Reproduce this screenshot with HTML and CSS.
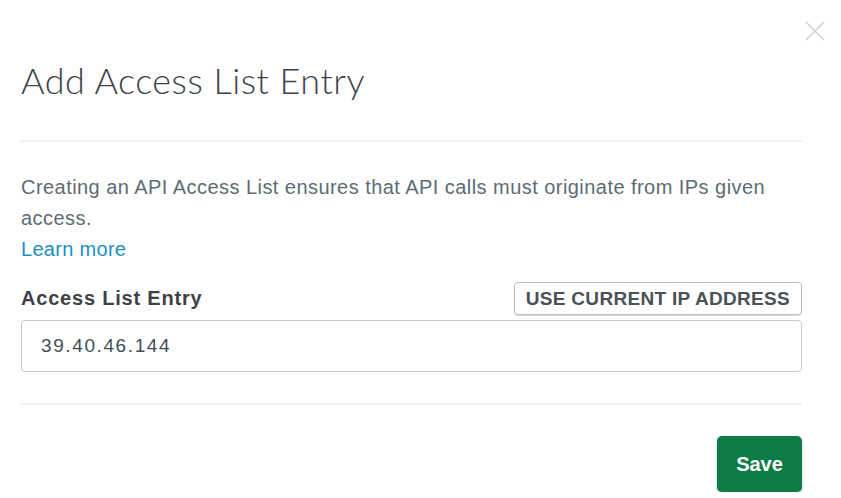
FILE: index.html
```html
<!DOCTYPE html>
<html>
<head>
<meta charset="utf-8">
<link rel="stylesheet" href="styles.css">
</head>
<body>
<div class="modal">
  <button class="close" aria-label="Close">
    <svg width="20" height="20" viewBox="0 0 20 20"><path d="M1 1 L19 19 M19 1 L1 19" stroke="#d2d2d2" stroke-width="1.6" fill="none"/></svg>
  </button>
  <h1 class="title">Add Access List Entry</h1>
  <hr class="divider">
  <p class="desc">Creating an API Access List ensures that API calls must originate from IPs given access.<br><a class="link" href="#">Learn more</a></p>
  <div class="field-head">
    <label class="label">Access List Entry</label>
    <button class="ip-btn">USE CURRENT IP ADDRESS</button>
  </div>
  <div class="input">39.40.46.144</div>
  <hr class="divider bottom">
  <div class="footer">
    <button class="save">Save</button>
  </div>
</div>
</body>
</html>
```
FILE: styles.css
```css
html, body {
  margin: 0;
  padding: 0;
  background: #fff;
}
.modal {
  position: relative;
  padding: 0 39px 0 21px;
  font-family: "Liberation Sans", Arial, sans-serif;
}
.close {
  position: absolute;
  top: 21px;
  right: 16px;
  border: 0;
  background: none;
  padding: 0;
  width: 20px;
  height: 20px;
}
.title {
  margin: 0;
  padding-top: 56px;
  font-family: Lato, sans-serif;
  font-weight: 300;
  font-size: 36px;
  line-height: 48px;
  color: #3d4247;
  letter-spacing: 0.5px;
}
.divider {
  margin: 36px 0 0;
  border: 0;
  border-top: 2px solid #f0f0f0;
}
.desc {
  margin: 30px 0 0;
  font-size: 20px;
  letter-spacing: 0.45px;
  line-height: 31px;
  color: #5d6c74;
}
.link {
  color: #1b8fc2;
  text-decoration: none;
  letter-spacing: 0.3px;
}
.field-head {
  display: flex;
  justify-content: space-between;
  align-items: center;
  margin-top: 17px;
}
.label {
  font-weight: bold;
  font-size: 20px;
  letter-spacing: 0.8px;
  color: #3d4247;
}
.ip-btn {
  height: 33px;
  padding: 0 11px;
  border: 1.5px solid #b8c0c4;
  border-radius: 4px;
  background: #fff;
  font-family: "Liberation Sans", Arial, sans-serif;
  font-weight: bold;
  font-size: 19px;
  letter-spacing: 0.3px;
  color: #4b5257;
  box-shadow: 0 1px 0 #d8dcde;
}
.input {
  margin-top: 5px;
  height: 52px;
  box-sizing: border-box;
  border: 1.5px solid #c8cccf;
  border-radius: 4px;
  padding: 0 19px;
  display: flex;
  align-items: center;
  font-size: 19px;
  letter-spacing: 1.6px;
  color: #3d4f58;
}
.divider.bottom {
  margin-top: 31px;
}
.footer {
  display: flex;
  justify-content: flex-end;
  margin-top: 31px;
}
.save {
  width: 85px;
  height: 56px;
  border: 0;
  border-radius: 5px;
  background: #0c7b46;
  color: #fff;
  font-family: "Liberation Sans", Arial, sans-serif;
  font-weight: bold;
  font-size: 20px;
  box-shadow: 0 2px 3px rgba(20, 120, 70, 0.35);
}
```
